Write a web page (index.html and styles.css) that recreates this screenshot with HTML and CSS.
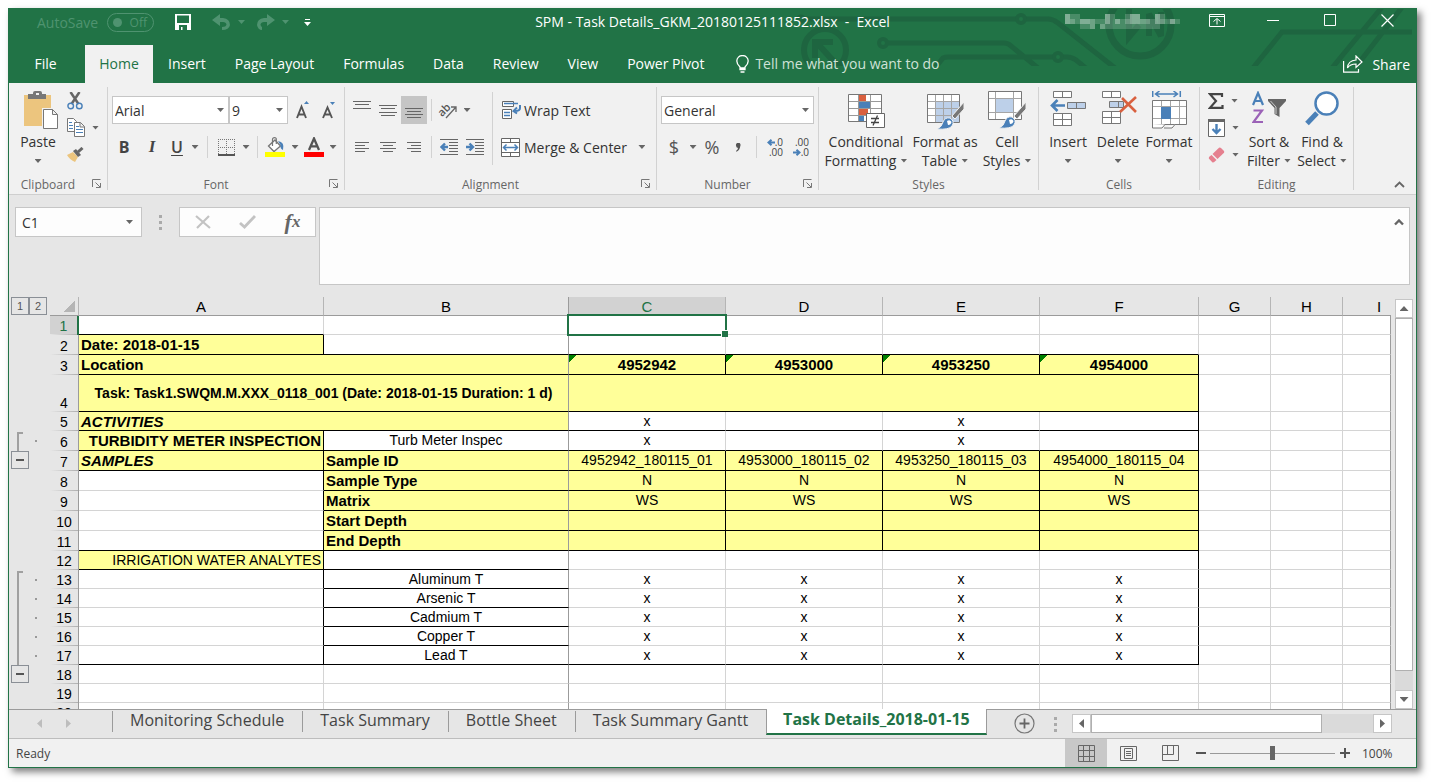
FILE: index.html
```
<!DOCTYPE html>
<html lang="en">
<head>
<meta charset="utf-8">
<title>SPM - Task Details_GKM_20180125111852.xlsx - Excel</title>
<link rel="stylesheet" href="styles.css">
</head>
<body>
<div class="window">
  <header class="top">
    <svg class="circuit" viewBox="796 9 619 57" aria-hidden="true">
      <g fill="none" stroke="#1e6540" stroke-width="5">
        <path d="M803 19H1015M1025 19H1047Q1052 19 1057 23L1114 68"/>
        <circle cx="1020" cy="19" r="4" stroke-width="4"/><circle cx="800" cy="19" r="3" stroke-width="3"/>
        <circle cx="824" cy="50" r="21" stroke-width="6"/>
        <path d="M814 58V42H832M816 43L837 66" stroke-width="6"/>
        <circle cx="882" cy="43" r="4" stroke-width="4"/>
        <path d="M887 43H1003Q1007 43 1010 46L1037 68M934 68L942 58Q944 57 947 57H1052M1062 57H1066Q1071 57 1075 60L1086 69"/>
        <circle cx="1057" cy="57" r="4" stroke-width="4"/>
        <circle cx="1139" cy="25" r="31" stroke-width="7"/>
        <path d="M1128 9v28l10-12M1148 36V14l12 22V12" stroke-width="6"/>
        <path d="M1252 68L1281 32H1411M1331 68L1382 6M1354 68L1402 6"/>
      </g>
    </svg>
    <div class="titlebar">
      <div class="quick">
        <span class="dim">AutoSave</span>
        <button class="switch" role="switch" aria-checked="false" aria-label="AutoSave"><span class="knob"></span>Off</button>
        <button class="save" aria-label="Save"><svg width="16" height="16" viewBox="0 0 16 16"><path d="M0 0H16V16H0zM2 1.500V9H14V1.500zM4 11V16H6V13H7.500V16H12V11z" fill="#fff" fill-rule="evenodd"/></svg></button>
        <button class="undo" aria-label="Undo"><svg width="19" height="17" viewBox="0 0 19 17"><path d="M8 0V4H11Q18 5 18 11Q17 16 10 16V13Q14 13 14.500 10.500Q14 8 11 8H8V12L0 6z" fill="#4f9370"/></svg><i class="caret"></i></button>
        <button class="redo" aria-label="Redo"><svg width="19" height="17" viewBox="0 0 19 17"><path d="M11 0V4H8Q1 5 1 11Q2 16 6 16V13Q4.500 12 4.500 10.500Q5 8 8 8H11V12L19 6z" fill="#4f9370"/></svg><i class="caret"></i></button>
        <button class="custom" aria-label="Customize Quick Access Toolbar"><svg width="7" height="7" viewBox="0 0 7 7"><path d="M1 0H6V1H1zM0 3H7L3.500 7z" fill="#fff"/></svg></button>
      </div>
      <div class="title">SPM - Task Details_GKM_20180125111852.xlsx&nbsp; -&nbsp; Excel</div>
      <div class="caption">
        <svg class="user" width="115" height="15" viewBox="0 0 23 3" preserveAspectRatio="none" shape-rendering="crispEdges" fill="#fff" aria-hidden="true">
          <path d="M0 0h3v1h-3zM0 1h23v1h-23zM3 2h3v1h-3zM7 2h12v1h-12zM8 0h2v1h-2zM12 0h3v1h-3zM18 0h2v1h-2z" opacity=".18"/>
          <path d="M0 0h1v2h-1zM3 1h2v1h-2zM8 0h1v2h-1zM10 1h1v1h-1zM13 0h2v2h-2zM18 0h1v2h-1zM21 1h1v1h-1z" opacity=".3"/>
          <path d="M1 1h1v1h-1zM5 1h1v2h-1zM12 1h1v1h-1zM15 1h2v1h-2zM19 1h1v1h-1zM7 2h1v1h-1z" opacity=".2"/>
        </svg>
        <button aria-label="Ribbon Display Options"><svg width="16" height="13" viewBox="0 0 16 13"><path d="M.5.5h15v12H.5zM.5 2.500h15M8 10.500V5M4.500 7.500L8 4.500L11.500 7.500" fill="none" stroke="#fff"/></svg></button>
        <button aria-label="Minimize"><svg width="13" height="13" viewBox="0 0 13 13"><path d="M0 6.500H12" stroke="#fff"/></svg></button>
        <button aria-label="Maximize"><svg width="13" height="13" viewBox="0 0 13 13"><path d="M.5.5h11v11H.5z" fill="none" stroke="#fff"/></svg></button>
        <button aria-label="Close"><svg width="13" height="13" viewBox="0 0 13 13"><path d="M.5.5l12 12M12.500.5l-12 12" stroke="#fff" stroke-width="1.200"/></svg></button>
      </div>
    </div>
    <nav class="tabs">
      <button class="file">File</button><button class="on">Home</button><button>Insert</button><button>Page Layout</button><button>Formulas</button><button>Data</button><button>Review</button><button>View</button><button>Power Pivot</button>
      <button class="tell"><svg width="13" height="18" viewBox="0 0 13 18"><path d="M4 14.500V12Q.8 9 .8 6A5.700 5.500 0 0 1 12.200 6Q12.200 9 9 12V14.500zM4 13H9M4.500 17H8.500" fill="none" stroke="#fff" stroke-width="1.300"/></svg>Tell me what you want to do</button>
      <button class="share"><svg width="20" height="18" viewBox="0 0 20 18"><path d="M.6 6V17.200H15.500V14M4.500 13Q5 5.500 13 5V1L19 7L13 12.500V9Q7 9 4.500 13z" fill="none" stroke="#fff" stroke-width="1.200"/></svg>Share</button>
    </nav>
  </header>

  <section class="ribbon" aria-label="Home">
    <div class="group g-clip">
      <div class="body">
        <button class="big paste"><span class="pic"><svg width="34" height="38" viewBox="0 0 34 38"><path d="M0 4H27V35H0z" fill="#ecc57e"/><path d="M4 3H9V2Q9 0 11 0H16Q18 0 18 2V3H22V8H4z" fill="#777"/><path d="M12 2H15V4H12z" fill="#f1f1f1"/><path d="M18 17H34V38H18z" fill="#f1f1f1"/><path d="M19.500 18.500H28.500L33.500 23.500V37.500H19.500zM28.500 18.500V23.500H33.500" fill="#fff" stroke="#777"/></svg></span>Paste<i class="caret"></i></button>
        <div class="stack">
          <button aria-label="Cut"><svg width="17" height="18" viewBox="0 0 17 18"><path d="M3.500 0L11.500 12M12.500 0L4.500 12" stroke="#666" stroke-width="2.500" fill="none"/><circle cx="3.700" cy="14" r="2.800" fill="none" stroke="#4a80b8" stroke-width="1.400"/><circle cx="12.300" cy="14" r="2.800" fill="none" stroke="#4a80b8" stroke-width="1.400"/></svg></button>
          <button aria-label="Copy"><svg width="18" height="19" viewBox="0 0 18 19"><g fill="#fff" stroke="#777"><path d="M.5.5H6.500L9.500 3.500V13.500H.5z"/><path d="M7.500 4.500H13.500L17.500 8.500V18.500H7.500zM13 4.500V9H17.500"/></g><path d="M2 4.500H5M2 7.500H6M2 10.500H6M9 8.500H12M9 11.500H16M9 14.500H16" stroke="#4a80b8"/></svg><i class="caret"></i></button>
          <button aria-label="Format Painter"><svg width="17" height="15" viewBox="0 0 17 15"><path d="M0 8L6 5L11 10L8 15Q3 13 0 8z" fill="#ecc57e"/><path d="M6 4L9 2L14 8L11 10z" fill="#666"/><path d="M11 5L15.500 1" stroke="#666" stroke-width="3"/></svg></button>
        </div>
      </div>
      <div class="label"><span>Clipboard</span><button class="launch" aria-label="Clipboard settings"><svg width="10" height="10" viewBox="0 0 10 10"><path d="M.5 8V.5H8.500M3.500 3.500L8 8M8.500 4V8.500H4" fill="none" stroke="#777"/></svg></button></div>
    </div>

    <div class="group g-font">
      <div class="body rows">
        <div class="row r1">
          <label class="combo w-name"><select aria-label="Font"><option>Arial</option></select><i class="caret"></i></label><label class="combo w-size"><select aria-label="Font Size"><option>9</option></select><i class="caret"></i></label>
          <button class="b26 grow" aria-label="Increase Font Size"><svg width="14" height="18" viewBox="0 0 14 18"><path d="M1 17L5.500 5.500L10 17M2.500 13.500H8.500" fill="none" stroke="#555" stroke-width="1.900"/><path d="M8 3L10.500 0L13 3z" fill="#4a80b8"/></svg></button>
          <button class="b26" aria-label="Decrease Font Size"><svg width="14" height="18" viewBox="0 0 14 18"><path d="M1 17L5.500 6.500L10 17M2.500 13.500H8.500" fill="none" stroke="#555" stroke-width="1.900"/><path d="M8 1H13L10.500 4z" fill="#4a80b8"/></svg></button>
        </div>
        <div class="row r2">
          <button class="b28 bold">B</button><button class="b28 ital">I</button><button class="b22 under">U</button><button class="c14" aria-label="Underline options"><i class="caret"></i></button><i class="sep s5"></i>
          <button class="b26" aria-label="Borders"><svg width="17" height="17" viewBox="0 0 17 17"><path d="M0 .5H17M0 8.500H17M.5 0V16M8.500 0V16M16.500 0V16" stroke="#777" stroke-dasharray="1 1"/><path d="M0 16H17" stroke="#555" stroke-width="2"/></svg></button><button class="c14" aria-label="Border options"><i class="caret"></i></button><i class="sep s4"></i>
          <button class="b26" aria-label="Fill Color"><svg width="20" height="20" viewBox="0 0 20 20"><path d="M3.500 9L10 3L15.500 9L9 14.500z" fill="#fff" stroke="#777" stroke-width="1.300"/><path d="M7.500 9V2.500Q7.500.7 9.500.7T11.300 2.500V7" fill="none" stroke="#777" stroke-width="1.200"/><path d="M13 4Q20 5 18 13Q15 12 15.500 8z" fill="#4a80b8"/><path d="M0 15H20V20H0z" fill="#ff0"/></svg></button><button class="c14" aria-label="Fill options"><i class="caret"></i></button>
          <button class="b24" aria-label="Font Color"><svg width="20" height="20" viewBox="0 0 20 20"><path d="M5 13L10 1.500L15 13M6.800 9.300H13.200" fill="none" stroke="#555" stroke-width="2.300"/><path d="M0 15H20V20H0z" fill="#f00"/></svg></button><button class="c14" aria-label="Font color options"><i class="caret"></i></button>
        </div>
      </div>
      <div class="label"><span>Font</span><button class="launch" aria-label="Font settings"><svg width="10" height="10" viewBox="0 0 10 10"><path d="M.5 8V.5H8.500M3.500 3.500L8 8M8.500 4V8.500H4" fill="none" stroke="#777"/></svg></button></div>
    </div>

    <div class="group g-align">
      <div class="body">
        <div class="rows left">
          <div class="row r1">
            <button class="b26" aria-label="Top Align"><svg width="18" height="19" viewBox="0 0 18 19"><path d="M0 .5H18M2 3.500H16M0 7.500H18" stroke="#666"/></svg></button><button class="b26" aria-label="Middle Align"><svg width="18" height="15" viewBox="0 0 18 15"><path d="M0 2.500H18M2 5.500H16M0 9.500H18M2 12.500H16" stroke="#666"/></svg></button><button class="b26 pressed" aria-label="Bottom Align"><svg width="18" height="18" viewBox="0 0 18 18"><path d="M0 7.500H18M2 10.500H16M0 13.500H18M2 16.500H16" stroke="#666"/></svg></button><i class="sep s4"></i>
            <button class="b24" aria-label="Orientation"><svg class="orient" width="20" height="18" viewBox="0 0 20 18"><text x="0" y="13" transform="rotate(-45 6 10)" class="ab">ab</text><path d="M8 17L18 6M13 6H18V11" fill="none" stroke="#666" stroke-width="1.300"/></svg></button><button class="c14" aria-label="Orientation options"><i class="caret"></i></button>
          </div>
          <div class="row r2">
            <button class="b26" aria-label="Align Left"><svg width="14" height="11" viewBox="0 0 14 11"><path d="M0 .5H14M0 3.500H10M0 6.500H14M0 9.500H10" stroke="#666"/></svg></button><button class="b26" aria-label="Center"><svg width="16" height="11" viewBox="0 0 16 11"><path d="M0 .5H16M3 3.500H13M0 6.500H16M3 9.500H13" stroke="#666"/></svg></button><button class="b26" aria-label="Align Right"><svg width="14" height="11" viewBox="0 0 14 11"><path d="M0 .5H14M4 3.500H14M0 6.500H14M4 9.500H14" stroke="#666"/></svg></button><i class="sep s4"></i>
            <button class="b26" aria-label="Decrease Indent"><svg width="18" height="16" viewBox="0 0 18 16"><path d="M0 .5H18M9 3.500H18M9 6.500H18M9 9.500H18M9 12.500H18M0 15.500H18" stroke="#666"/><path d="M8 8H2M5 4.500L1.500 8L5 11.500" fill="none" stroke="#4a80b8" stroke-width="2.400"/></svg></button><button class="b26" aria-label="Increase Indent"><svg width="18" height="16" viewBox="0 0 18 16"><path d="M0 .5H18M9 3.500H18M9 6.500H18M9 9.500H18M9 12.500H18M0 15.500H18" stroke="#666"/><path d="M0 8H6.500M3.500 4.500L7 8L3.500 11.500" fill="none" stroke="#4a80b8" stroke-width="2.400"/></svg></button>
          </div>
        </div>
        <i class="sep tall"></i>
        <div class="rows right">
          <div class="row r1"><button class="wide"><svg width="20" height="19" viewBox="0 0 20 19"><path d="M1.500.5H12.500V5.500H1.500zM1.500 8.500H10.500V17.500H1.500z" fill="#fff" stroke="#666"/><path d="M3 2.500H17M3 11.500H9M3 14.500H9" stroke="#4a80b8" stroke-width="1.300"/><path d="M19 4V7Q19 10 14 10M16 6.500L12.500 10L16 12.500" fill="none" stroke="#4a80b8" stroke-width="2"/></svg>Wrap Text</button></div>
          <div class="row r2"><button class="wide"><svg width="20" height="19" viewBox="0 0 20 19"><path d="M.5.5H18.500V18.500H.5zM.5 4.500H18.500M.5 14.500H18.500M9.500.5V4.500M9.500 14.500V18.500" fill="#fff" stroke="#666"/><path d="M3 9.500H16M5.500 6.500L2.500 9.500L5.500 12.500M13.500 6.500L16.500 9.500L13.500 12.500" fill="none" stroke="#4a80b8" stroke-width="1.500"/></svg>Merge &amp; Center</button><button class="c14 far" aria-label="Merge options"><i class="caret"></i></button></div>
        </div>
      </div>
      <div class="label"><span>Alignment</span><button class="launch" aria-label="Alignment settings"><svg width="10" height="10" viewBox="0 0 10 10"><path d="M.5 8V.5H8.500M3.500 3.500L8 8M8.500 4V8.500H4" fill="none" stroke="#777"/></svg></button></div>
    </div>

    <div class="group g-num">
      <div class="body rows">
        <div class="row r1 pad"><label class="combo fill"><select aria-label="Number Format"><option>General</option></select><i class="caret"></i></label></div>
        <div class="row r2 pad"><button class="b26 sym">$</button><button class="c12" aria-label="Accounting options"><i class="caret"></i></button><button class="b26 sym">%</button><button class="b26" aria-label="Comma Style"><svg width="6" height="9" viewBox="0 0 6 9"><path d="M1 2.500A2.300 2.300 0 1 1 5.300 3Q5 7 1.500 8.700L1 8Q3 6.500 3 5Q1 4.500 1 2.500z" fill="#555"/></svg></button><i class="sep s5"></i><button class="b26 dec" aria-label="Increase Decimal"><span><svg width="8" height="7" viewBox="0 0 8 7"><path d="M8 3.500H2M4.500.8L1.500 3.500L4.500 6.200" fill="none" stroke="#4a80b8" stroke-width="2"/></svg>.0</span><span>.00</span></button><button class="b26 dec" aria-label="Decrease Decimal"><span>.00</span><span><svg width="8" height="7" viewBox="0 0 8 7"><path d="M0 3.500H6M3.500.8L6.500 3.500L3.500 6.200" fill="none" stroke="#4a80b8" stroke-width="2"/></svg>.0</span></button></div>
      </div>
      <div class="label"><span>Number</span><button class="launch" aria-label="Number settings"><svg width="10" height="10" viewBox="0 0 10 10"><path d="M.5 8V.5H8.500M3.500 3.500L8 8M8.500 4V8.500H4" fill="none" stroke="#777"/></svg></button></div>
    </div>

    <div class="group g-styles">
      <div class="body pad">
        <button class="big w86"><span class="pic low"><svg width="37" height="34" viewBox="0 0 37 34"><path d="M.5.5H33.500V27.500H.5z" fill="#fff"/><path d="M11 1H18V7H11zM11 15H20V21H11z" fill="#d9603f"/><path d="M11 8H22V14H11zM11 22H16V28H11z" fill="#4a80b8"/><path d="M.5.5H33.500V27.500H.5z" fill="none" stroke="#777"/><path d="M1 7.500H33M1 14.500H33M1 21.500H33M10.500 1V27M22.500 1V27" stroke="#999" fill="none"/><path d="M18.500 19.500H36.500V33.500H18.500z" fill="#fff" stroke="#666"/><path d="M23 24.500H31M23 28.500H31M29.500 21.500L25 31.500" stroke="#444" stroke-width="1.300"/></svg></span>Conditional<br><span class="ln">Formatting<i class="caret"></i></span></button>
        <button class="big w72"><span class="pic low"><svg width="37" height="36" viewBox="0 0 37 36"><path d="M.5.5H32.500V28.500H.5z" fill="#fff"/><path d="M8 8H32V28H8z" fill="#bdd0e9"/><path d="M.5.5H32.500V28.500H.5z" fill="none" stroke="#777"/><path d="M1 7.500H32M1 14.500H32M1 21.500H32M8.500 1V28M16.500 1V28M24.500 1V28" stroke="#a5a5a5"/><path d="M37 8L25 22L28 25L37 15z" fill="#777" stroke="#f1f1f1"/><path d="M10 35Q15 33 16 28Q18 23 23 24Q28 27 25 32Q22 36 10 35z" fill="#4a80b8" stroke="#f1f1f1"/><path d="M20 27Q23 25 24.500 28Q24 31 21 31" fill="#fff"/></svg></span>Format as<br><span class="ln">Table<i class="caret"></i></span></button>
        <button class="big w52"><span class="pic"><svg width="38" height="38" viewBox="0 0 38 38"><path d="M.5.5H33.500V28.500H.5z" fill="#fff" stroke="#777"/><path d="M1 7.500H33M1 21.500H33M7.500 1V28M25.500 1V28" stroke="#a5a5a5"/><path d="M8 8H25V21H8z" fill="#bdd0e9"/><path d="M38 11L26 25L29 28L38 18z" fill="#777" stroke="#f1f1f1"/><path d="M11 37Q16 35 17 30Q19 25 24 26Q29 29 26 34Q23 38 11 37z" fill="#4a80b8" stroke="#f1f1f1"/><path d="M21 29Q24 27 25.500 30Q25 33 22 33" fill="#fff"/></svg></span>Cell<br><span class="ln">Styles<i class="caret"></i></span></button>
      </div>
      <div class="label"><span>Styles</span></div>
    </div>

    <div class="group g-cells">
      <div class="body pad">
        <button class="big w50"><span class="pic"><svg width="37" height="36" viewBox="0 0 37 36"><g fill="#fff" stroke="#777"><path d="M3.500.5H21.500V6.500H3.500zM12.500.5V6.500M3.500 22.500H21.500V34.500H3.500zM12.500 22.500V34.500M3.500 28.500H21.500"/></g><path d="M17.500 11.500H35.500V17.500H17.500zM26.500 11.500V17.500" fill="#bdd0e9" stroke="#777"/><path d="M15 14.500H2M7.500 9L2 14.500L7.500 20" fill="none" stroke="#4a80b8" stroke-width="2.600"/></svg></span>Insert<i class="caret"></i></button>
        <button class="big w50"><span class="pic"><svg width="37" height="36" viewBox="0 0 37 36"><g fill="#fff" stroke="#777"><path d="M2.500.5H20.500V6.500H2.500zM11.500.5V6.500M2.500 20.500H20.500V32.500H2.500zM11.500 20.500V32.500M2.500 26.500H20.500"/></g><path d="M9.500 10.500H23.500V16.500H9.500zM18.500 10.500V16.500" fill="#bdd0e9" stroke="#777"/><path d="M22 7L36 21M36 6L20 21" fill="none" stroke="#d9603f" stroke-width="2.600"/></svg></span>Delete<i class="caret"></i></button>
        <button class="big w52"><span class="pic"><svg width="35" height="38" viewBox="0 0 35 38"><path d="M.7 0V6M28.300 0V6M4 3H25M7.500 0L3.500 3L7.500 6M21.500 0L25.500 3L21.500 6" fill="none" stroke="#4a80b8" stroke-width="1.500"/><path d="M.5 9.500H34.500V33.500H.5z" fill="#fff" stroke="#777"/><path d="M1 15.500H34M1 27.500H34M9.500 10V33M18.500 10V33M27.500 10V33" stroke="#a5a5a5"/><path d="M9 16H19V28H9z" fill="#4a80b8"/><path d="M.5 33V37H10L13 33.500M12 37H20L23 33.500" fill="#fff" stroke="#777"/></svg></span>Format<i class="caret"></i></button>
      </div>
      <div class="label"><span>Cells</span></div>
    </div>

    <div class="group g-edit">
      <div class="body pad">
        <div class="stack tight">
          <button aria-label="AutoSum"><svg width="16" height="16" viewBox="0 0 16 16"><path d="M14 4V1.200H2L8 8L2 14.800H14.500V12" fill="none" stroke="#444" stroke-width="2.200"/></svg><i class="caret"></i></button>
          <button aria-label="Fill"><svg width="17" height="18" viewBox="0 0 17 18"><path d="M.5.5H16.500V17.500H.5z" fill="#fff" stroke="#666"/><path d="M0 0H17V3H0z" fill="#666"/><path d="M8.500 5V14M4.500 10L8.500 14L12.500 10" fill="none" stroke="#4a80b8" stroke-width="2.400"/></svg><i class="caret"></i></button>
          <button aria-label="Clear"><svg width="17" height="16" viewBox="0 0 17 16"><path d="M4.500 7L11 .8Q12 0 13 1L16 4Q16.500 5 16 5.700L9.500 12z" fill="#e5808f"/><path d="M3.500 8L8.500 13L6 15.300L4.500 15.500L.8 11.500L1 10z" fill="#e5808f"/></svg><i class="caret"></i></button>
        </div>
        <button class="big w52"><span class="pic"><svg width="34" height="32" viewBox="0 0 34 32"><path d="M1 14L6 2L11 14M3 10H9" fill="none" stroke="#4a80b8" stroke-width="2.200"/><path d="M1.500 19.500H10L1.500 31H11" fill="none" stroke="#9b62b7" stroke-width="2.200"/><path d="M16 8H34V10L27.500 17V26L22.500 23V17L16 10z" fill="#666"/><path d="M18.500 10L24 16V23" stroke="#ccc" fill="none"/></svg></span>Sort &amp;<br><span class="ln">Filter<i class="caret"></i></span></button>
        <button class="big w54"><span class="pic"><svg width="34" height="35" viewBox="0 0 34 35"><path d="M12 22L2 32.500" stroke="#4a80b8" stroke-width="5"/><circle cx="21.500" cy="12.500" r="11" fill="#fff" stroke="#4a80b8" stroke-width="2.500"/></svg></span>Find &amp;<br><span class="ln">Select<i class="caret"></i></span></button>
      </div>
      <div class="label"><span>Editing</span></div>
    </div>
    <button class="collapse" aria-label="Collapse the Ribbon"><svg width="11" height="7" viewBox="0 0 11 7"><path d="M1 6L5.500 1.500L10 6" fill="none" stroke="#666" stroke-width="1.800"/></svg></button>
  </section>

  <section class="formula">
    <div class="namebox"><input type="text" value="C1" aria-label="Name Box"><i class="caret"></i></div>
    <div class="dots"><i></i><i></i><i></i></div>
    <div class="fxbox">
      <button aria-label="Cancel"><svg width="16" height="14" viewBox="0 0 16 14"><path d="M1 1L15 13M14 1L2 13" stroke="#c3c3c3" stroke-width="2.200"/></svg></button>
      <button aria-label="Enter"><svg width="17" height="14" viewBox="0 0 17 14"><path d="M1 8L5.500 12L16 1" fill="none" stroke="#c3c3c3" stroke-width="2.800"/></svg></button>
      <button class="fx" aria-label="Insert Function"><span>f</span><small>x</small></button>
    </div>
    <div class="bar"><textarea aria-label="Formula Bar"></textarea><button aria-label="Collapse Formula Bar"><svg width="10" height="7" viewBox="0 0 10 7"><path d="M1 5.500L5 1.500L9 5.500" fill="none" stroke="#666" stroke-width="2.400"/></svg></button></div>
  </section>

  <main class="work">
    <div class="sheet">
      <table>
        <colgroup><col class="k-out"><col class="k-num"><col class="k-a"><col class="k-a"><col class="k-c"><col class="k-c"><col class="k-c"><col class="k-f"><col class="k-g"><col class="k-g"><col></colgroup>
        <thead>
          <tr><th class="out"><div class="levels"><button>1</button><button>2</button></div></th><th class="corner"></th><th>A</th><th class="fz">B</th><th class="sel">C</th><th>D</th><th>E</th><th>F</th><th>G</th><th>H</th><th class="cut">I</th></tr>
        </thead>
        <tbody>
          <tr><td class="out"></td><th class="sel">1</th><td class="kb"></td><td class="fz"></td><td class="cur"><div class="ring"></div></td><td></td><td></td><td></td><td></td><td></td><td></td></tr>
          <tr class="h20"><td class="out"></td><th>2</th><td class="y kr kb b">Date: 2018-01-15</td><td class="kb fz"></td><td class="kb"></td><td class="kb"></td><td class="kb"></td><td class="kb"></td><td></td><td></td><td></td></tr>
          <tr class="h20"><td class="out"></td><th>3</th><td colspan="2" class="y kb b fz">Location</td><td class="y kr kb b c flag">4952942</td><td class="y kr kb b c flag">4953000</td><td class="y kr kb b c flag">4953250</td><td class="y kr kb b c flag">4954000</td><td></td><td></td><td></td></tr>
          <tr class="h37"><td class="out"></td><th>4</th><td colspan="2" class="y kb b task fz">Task: Task1.SWQM.M.XXX_0118_001 (Date: 2018-01-15 Duration: 1 d)</td><td colspan="4" class="y kr kb"></td><td></td><td></td><td></td></tr>
          <tr><td class="out"></td><th>5</th><td colspan="2" class="y kb b i fz">ACTIVITIES</td><td class="kb c">x</td><td class="kb"></td><td class="kb c">x</td><td class="kb kr"></td><td></td><td></td><td></td></tr>
          <tr class="h20"><td class="out first"></td><th>6</th><td class="y kr kb b r">TURBIDITY METER INSPECTION</td><td class="kb c fz">Turb Meter Inspec</td><td class="kb c">x</td><td class="kb"></td><td class="kb c">x</td><td class="kb kr"></td><td></td><td></td><td></td></tr>
          <tr class="h20"><td class="out"><button class="minus" aria-label="Collapse row 6"></button></td><th>7</th><td class="y kr kb b i">SAMPLES</td><td class="y kb b fz">Sample ID</td><td class="y kr kb c">4952942_180115_01</td><td class="y kr kb c">4953000_180115_02</td><td class="y kr kb c">4953250_180115_03</td><td class="y kr kb c">4954000_180115_04</td><td></td><td></td><td></td></tr>
          <tr class="h20"><td class="out"></td><th>8</th><td class="kr"></td><td class="y kb b fz">Sample Type</td><td class="y kr kb c">N</td><td class="y kr kb c">N</td><td class="y kr kb c">N</td><td class="y kr kb c">N</td><td></td><td></td><td></td></tr>
          <tr class="h20"><td class="out"></td><th>9</th><td class="kr"></td><td class="y kb b fz">Matrix</td><td class="y kr kb c">WS</td><td class="y kr kb c">WS</td><td class="y kr kb c">WS</td><td class="y kr kb c">WS</td><td></td><td></td><td></td></tr>
          <tr class="h20"><td class="out"></td><th>10</th><td class="kr"></td><td class="y kb b fz">Start Depth</td><td class="y kr kb"></td><td class="y kr kb"></td><td class="y kr kb"></td><td class="y kr kb"></td><td></td><td></td><td></td></tr>
          <tr class="h20"><td class="out"></td><th>11</th><td class="kr kb"></td><td class="y kb b fz">End Depth</td><td class="y kr kb"></td><td class="y kr kb"></td><td class="y kr kb"></td><td class="y kr kb"></td><td></td><td></td><td></td></tr>
          <tr><td class="out"></td><th>12</th><td class="y kr kb r">IRRIGATION WATER ANALYTES</td><td class="kb fz"></td><td></td><td></td><td></td><td class="kr"></td><td></td><td></td><td></td></tr>
          <tr><td class="out first"></td><th>13</th><td class="kr"></td><td class="kb c fz">Aluminum T</td><td class="c">x</td><td class="c">x</td><td class="c">x</td><td class="c kr">x</td><td></td><td></td><td></td></tr>
          <tr><td class="out mid"></td><th>14</th><td class="kr"></td><td class="kb c fz">Arsenic T</td><td class="c">x</td><td class="c">x</td><td class="c">x</td><td class="c kr">x</td><td></td><td></td><td></td></tr>
          <tr><td class="out mid"></td><th>15</th><td class="kr"></td><td class="kb c fz">Cadmium T</td><td class="c">x</td><td class="c">x</td><td class="c">x</td><td class="c kr">x</td><td></td><td></td><td></td></tr>
          <tr><td class="out mid"></td><th>16</th><td class="kr"></td><td class="kb c fz">Copper T</td><td class="c">x</td><td class="c">x</td><td class="c">x</td><td class="c kr">x</td><td></td><td></td><td></td></tr>
          <tr><td class="out mid"></td><th>17</th><td class="kr kb"></td><td class="kb c fz">Lead T</td><td class="c kb">x</td><td class="c kb">x</td><td class="c kb">x</td><td class="c kr kb">x</td><td></td><td></td><td></td></tr>
          <tr><td class="out"><button class="minus" aria-label="Collapse rows 13 to 17"></button></td><th>18</th><td></td><td class="fz"></td><td></td><td></td><td></td><td></td><td></td><td></td><td></td></tr>
          <tr><td class="out"></td><th>19</th><td></td><td class="fz"></td><td></td><td></td><td></td><td></td><td></td><td></td><td></td></tr>
          <tr><td class="out"></td><th>20</th><td></td><td class="fz"></td><td></td><td></td><td></td><td></td><td></td><td></td><td></td></tr>
        </tbody>
      </table>
    </div>
    <div class="vscroll">
      <button aria-label="Scroll up"><i class="tri up"></i></button>
      <div class="track"><div class="thumb"></div></div>
      <button aria-label="Scroll down"><i class="tri down"></i></button>
    </div>
  </main>

  <div class="sheets">
    <div class="nav"><button aria-label="Previous sheet"><i class="tri prev"></i></button><button aria-label="Next sheet"><i class="tri next"></i></button></div>
    <button class="tab">Monitoring Schedule</button><button class="tab">Task Summary</button><button class="tab">Bottle Sheet</button><button class="tab">Task Summary Gantt</button><button class="tab active">Task Details_2018-01-15</button>
    <button class="add" aria-label="New sheet"><svg width="21" height="21" viewBox="0 0 21 21"><circle cx="10.500" cy="10.500" r="9.500" fill="none" stroke="#777" stroke-width="1.200"/><path d="M10.500 5.500V15.500M5.500 10.500H15.500" stroke="#666" stroke-width="1.800"/></svg></button>
    <div class="dots"><i></i><i></i><i></i></div>
    <div class="hscroll"><button aria-label="Scroll left"><i class="tri prev"></i></button><div class="track"><div class="thumb"></div></div><button aria-label="Scroll right"><i class="tri next"></i></button></div>
  </div>

  <footer class="status">
    <span class="ready">Ready</span>
    <button class="view on" aria-label="Normal"><svg width="17" height="17" viewBox="0 0 17 17"><path d="M.5.5H16.500V16.500H.5zM5.500.5V16.500M11.500.5V16.500M.5 5.500H16.500M.5 11.500H16.500" fill="none" stroke="#666"/></svg></button>
    <button class="view" aria-label="Page Layout"><svg width="17" height="15" viewBox="0 0 17 15"><path d="M.5.5H16.500V14.500H.5zM4.500 2.500H12.500V12.500H4.500zM6 5.500H11M6 7.500H11M6 9.500H11" fill="none" stroke="#666"/></svg></button>
    <button class="view" aria-label="Page Break Preview"><svg width="17" height="16" viewBox="0 0 17 16"><path d="M.5.5H16.500V15.500H.5zM5.500.5V9.500M11.500.5V9.500M.5 9.500H11.500" fill="none" stroke="#666"/></svg></button>
    <button class="zoom" aria-label="Zoom out"><svg width="10" height="10" viewBox="0 0 10 10"><path d="M0 5H10" stroke="#555" stroke-width="2"/></svg></button>
    <input class="slider" type="range" min="0" max="200" value="100" aria-label="Zoom">
    <button class="zoom" aria-label="Zoom in"><svg width="10" height="10" viewBox="0 0 10 10"><path d="M0 5H10M5 0V10" stroke="#555" stroke-width="2"/></svg></button>
    <span class="pct">100%</span>
  </footer>
</div>
</body>
</html>
```
FILE: styles.css
```
* { box-sizing: border-box; }
body {
  margin: 0;
  height: 100vh;
  padding: 8px 17px 16px 8px;
  display: flex;
  background: #fff;
  color: #333;
  font: 14px/19px "Open Sans", "Noto Sans", sans-serif;
}
button, input, select, textarea { font: inherit; color: inherit; margin: 0; padding: 0; border: 0; background: none; border-radius: 0; outline: 0; }
button { display: flex; align-items: center; justify-content: center; white-space: nowrap; }
svg { display: block; flex: none; }
.window {
  flex: 1;
  min-width: 0;
  display: flex;
  flex-direction: column;
  border: 1px solid #217346;
  background: #e6e6e6;
  box-shadow: 4px 4px 7px rgba(0, 0, 0, .5);
}
.caret { display: block; flex: none; width: 7px; height: 4px; background: #666; clip-path: polygon(0 0, 100% 0, 50% 100%); }

/* title bar and ribbon tabs */
.top { position: relative; background: #217346; color: #fff; }
.circuit { position: absolute; top: 0; right: 0; width: 619px; height: 57px; }
.titlebar { position: relative; display: grid; grid-template-columns: 1fr auto 1fr; align-items: start; height: 36px; }
.title { line-height: 25px; }
.quick { display: flex; align-items: center; height: 26px; padding-left: 28px; color: #4f9370; }
.quick .caret { background: #4f9370; }
.dim { width: 70px; }
.switch { width: 47px; height: 19px; padding: 0 6px 0 5px; justify-content: space-between; border: 1px solid #4f9370; border-radius: 10px; font-size: 12px; }
.knob { width: 9px; height: 9px; border-radius: 50%; background: #4f9370; }
.save { width: 58px; }
.undo, .redo { width: 44px; gap: 7px; justify-content: flex-start; }
.custom { width: 14px; }
.caption { display: flex; justify-content: flex-end; align-items: center; height: 22px; }
.caption button { width: 57px; height: 22px; }
.user { margin: 3px 8px 0 0; }
.tabs { position: relative; display: flex; height: 38px; }
.tabs button { padding: 0 14px 1px 15px; }
.tabs .file { width: 72px; margin-right: 4px; }
.tabs .on { width: 68px; padding: 0 0 1px; background: #f1f1f1; color: #217346; }
.tabs .tell { padding-left: 18px; gap: 6px; color: #cfe2d7; }
.tabs .share { margin-left: auto; padding: 0 6px; gap: 9px; }

/* ribbon */
.ribbon { display: flex; padding: 4px 0; background: #f1f1f1; border-bottom: 1px solid #cfcfcf; color: #333; }
.group { flex: none; display: flex; flex-direction: column; height: 103px; border-right: 1px solid #d2d2d2; }
.g-clip { width: 99px; }
.g-font { width: 237px; }
.g-align { width: 312px; }
.g-num { width: 162px; }
.g-styles { width: 220px; }
.g-cells { width: 161px; }
.g-edit { width: 154px; }
.body { flex: 1; display: flex; }
.rows { display: flex; flex-direction: column; padding-top: 9px; gap: 11px; }
.body .left { padding-left: 4px; }
.pad { padding-left: 4px; }
.row { display: flex; align-items: center; }
.r1 { height: 28px; }
.r2 { height: 24px; }
.g-font .r1 { padding-left: 4px; }
.g-font .r2 { padding-left: 2px; }
.b22 { width: 22px; height: 24px; }
.b24 { width: 24px; height: 24px; }
.b26 { width: 26px; height: 24px; }
.b28 { width: 28px; height: 24px; }
.c12 { width: 12px; height: 24px; }
.c14 { width: 14px; height: 24px; }
.grow { margin-left: 2px; }
.far { margin-left: 8px; }
.pressed { height: 28px; background: #c5c5c5; }
.sep { flex: none; width: 1px; height: 22px; background: #d2d2d2; }
.s4 { margin: 0 4px; }
.s5 { margin: 0 5px; }
.tall { height: 73px; margin: 5px 4px 0; }
.bold { font-weight: 700; font-size: 16px; color: #444; }
.ital { font: italic 700 17px "Liberation Serif", serif; color: #444; }
.under { font-weight: 600; font-size: 16px; color: #444; text-decoration: underline; text-underline-offset: 2px; }
.sym { font-size: 18px; color: #555; }
.orient { overflow: visible; }
.ab { font-size: 11px; font-weight: 600; fill: #555; }
.wide { padding-left: 4px; gap: 3px; height: 24px; }
.dec { flex-direction: column; align-items: flex-end; font-size: 10px; line-height: 10px; padding-right: 5px; color: #444; }
.dec span { display: flex; align-items: center; }
.combo { display: grid; align-items: center; height: 28px; background: #fff; border: 1px solid #c6c6c6; }
.combo select, .combo .caret { grid-area: 1 / 1; }
.combo select { appearance: none; width: 100%; height: 26px; padding-left: 2px; }
.combo .caret { justify-self: end; margin-right: 4px; pointer-events: none; }
.w-name { width: 117px; }
.w-size { width: 59px; }
.fill { width: 153px; }
.big { flex-direction: column; justify-content: flex-start; padding-top: 4px; }
.big br { display: none; }
.pic { display: flex; flex: none; justify-content: center; height: 41px; }
.low { padding-top: 3px; }
.ln { display: flex; align-items: center; gap: 4px; }
.big > .caret { margin-top: 8px; }
.paste { width: 58px; }
.paste .pic { padding-left: 5px; }
.w50 { width: 50px; }
.w52 { width: 52px; }
.w54 { width: 54px; }
.w72 { width: 72px; }
.w86 { width: 86px; }
.stack { display: flex; flex-direction: column; }
.stack button { height: 27px; gap: 7px; justify-content: flex-start; }
.tight button { width: 39px; padding-left: 4px; }
.label { display: flex; height: 12px; align-items: center; font-size: 12px; color: #666; }
.label span { flex: 1; text-align: center; }
.launch { width: 20px; }
.collapse { width: 20px; height: 12px; margin: auto 7px 0 auto; }

/* formula bar */
.formula { display: flex; align-items: flex-start; padding: 12px 6px 13px; }
.namebox { display: grid; align-items: center; width: 127px; height: 30px; background: #fdfdfd; border: 1px solid #c6c6c6; }
.namebox input, .namebox .caret { grid-area: 1 / 1; }
.namebox input { width: 100%; padding-left: 6px; }
.namebox .caret { justify-self: end; margin-right: 8px; }
.dots { display: flex; flex-direction: column; gap: 3px; }
.dots i { width: 3px; height: 3px; background: #aaa; }
.formula .dots { margin: 8px 17px 0; }
.fxbox { display: flex; width: 137px; height: 30px; background: #fdfdfd; border: 1px solid #c6c6c6; }
.fxbox button { flex: 1; }
.fx { font: italic 700 22px/20px "Liberation Serif", serif; color: #666; }
.fx small { font-size: 17px; }
.bar { flex: 1; display: flex; height: 78px; margin-left: 3px; background: #fdfdfd; border: 1px solid #c6c6c6; }
.bar textarea { flex: 1; resize: none; }
.bar button { width: 20px; height: 28px; }

/* worksheet */
.work { flex: 1; min-height: 0; display: flex; margin-top: -1px; }
.sheet { flex: 1; min-width: 0; overflow: hidden; }
table { width: 100%; table-layout: fixed; border-collapse: separate; border-spacing: 0; font: 14px/17px "Liberation Sans", Arial, sans-serif; color: #000; }
.k-out { width: 41px; }
.k-num { width: 29px; }
.k-a { width: 245px; }
.k-c { width: 157px; }
.k-f { width: 159px; }
.k-g { width: 72px; }
th { font-weight: 400; padding: 0; }
tr { height: 19px; }
.h20 { height: 20px; }
.h37 { height: 37px; }
td { padding: 0 2px; background: #fff; border-right: 1px solid #d4d4d4; border-bottom: 1px solid #d4d4d4; white-space: nowrap; }
thead th { font-size: 15px; background: #e6e6e6; border-right: 1px solid #b5b5b5; border-bottom: 1px solid #9b9b9b; }
tbody th { background: #e6e6e6 linear-gradient(90deg, #e6e6e6, #b0b0b0) left bottom / 100% 1px no-repeat; border-right: 1px solid #9b9b9b; vertical-align: bottom; }
thead th:last-child { border-right: 0; }
tr td:last-child { border-right-color: #9b9b9b; }
.cut { padding-left: 24px; }
.y { background-color: #ff9; }
.kr { border-right-color: #000; }
.kb { border-bottom-color: #000; }
.b { font-weight: 700; font-size: 15px; }
.task { font-size: 14px; text-align: center; }
.i { font-style: italic; }
.c { text-align: center; }
.r { text-align: right; }
td.fz, thead .fz { border-right-color: #9b9b9b; }
thead .sel, tbody th.sel { background-color: #d2d2d2; color: #217346; }
tbody th.sel { border-right: 2px solid #217346; }
.flag { background-image: linear-gradient(135deg, #008000 5px, transparent 5px); background-size: 7px 7px; background-repeat: no-repeat; }
td.out, thead .out { padding: 0; background-color: #e6e6e6; border: 0; background-repeat: no-repeat; vertical-align: top; }
thead .corner { background: #e6e6e6 linear-gradient(135deg, transparent 50%, #b5b5b5 50%) 14px 4px / 11px 11px no-repeat; }
.levels { display: flex; padding-left: 2px; }
.levels button { width: 18px; height: 18px; border: 1px solid #8a8f96; font-size: 11px; color: #555; }
td.first { background-image: linear-gradient(#a0a0a0, #a0a0a0), linear-gradient(#a0a0a0, #a0a0a0), linear-gradient(#999, #999); background-size: 6px 2px, 2px 100%, 2px 2px; background-position: 8px 1px, 8px 2px, 26px 9px; }
td.mid { background-image: linear-gradient(#a0a0a0, #a0a0a0), linear-gradient(#999, #999); background-size: 2px 100%, 2px 2px; background-position: 8px 0, 26px 9px; }
.minus { width: 18px; height: 18px; margin-left: 2px; border: 1px solid #8a8f96; background: linear-gradient(#555, #555) center / 8px 2px no-repeat; }
.cur { position: relative; }
.ring { position: absolute; inset: -2px; border: 2px solid #217346; z-index: 1; }
.ring::after { content: ""; position: absolute; right: -3px; bottom: -3px; width: 6px; height: 6px; background: #217346; border: solid #fff; border-width: 1px 0 0 1px; }

/* scroll bars */
.vscroll { display: flex; flex-direction: column; width: 25px; padding: 2px 3px 0 4px; }
.vscroll button { height: 19px; background: #fff; border: 1px solid #c6c6c6; }
.vscroll .track { flex: 1; background: #dadada; }
.vscroll .thumb { height: 95%; background: #fff; border: 1px solid #b0b0b0; }
.tri { width: 9px; height: 5px; background: #666; }
.up { clip-path: polygon(50% 0, 100% 100%, 0 100%); }
.down { clip-path: polygon(0 0, 100% 0, 50% 100%); }
.prev, .next { width: 5px; height: 9px; }
.prev { clip-path: polygon(100% 0, 100% 100%, 0 50%); }
.next { clip-path: polygon(0 0, 100% 50%, 0 100%); }

/* sheet tabs */
.sheets { display: flex; align-items: flex-start; height: 29px; border-top: 1px solid #9b9b9b; font-size: 16px; color: #444; }
.nav { display: flex; width: 103px; height: 27px; padding-left: 16px; }
.nav button { width: 29px; }
.nav .tri { background: #bdbdbd; }
.tab { height: 21px; margin-top: 1px; padding: 0 18px 2px 17px; border-left: 1px solid #9b9b9b; }
.active { height: 26px; margin-top: -1px; padding: 0 16px 4px; background: #fff; border-right: 1px solid #9b9b9b; border-bottom: 2px solid #217346; color: #217346; font-weight: 700; }
.add { width: 21px; height: 27px; margin-left: auto; }
.sheets .dots { margin: 7px 15px 0 19px; }
.hscroll { display: flex; width: 320px; height: 19px; margin: 4px 24px 0 0; }
.hscroll button { width: 19px; background: #fff; border: 1px solid #c6c6c6; }
.hscroll .track { flex: 1; background: #dadada; }
.hscroll .thumb { width: 82%; height: 19px; background: #fff; border: 1px solid #b0b0b0; }

/* status bar */
.status { display: flex; align-items: center; height: 29px; background: #f1f1f1; border-top: 1px solid #bdbdbd; font-size: 12px; color: #444; }
.ready { margin: 0 auto 0 7px; }
.view { width: 42px; height: 28px; }
.view.on { background: #c8c8c8; }
.zoom { width: 10px; height: 20px; margin-left: 5px; }
.slider { appearance: none; width: 125px; height: 14px; margin: 0 0 0 4px; background: linear-gradient(#999, #999) center / 100% 1px no-repeat; }
.slider::-webkit-slider-thumb { appearance: none; width: 5px; height: 14px; background: #666; border-radius: 0; }
.pct { width: 54px; margin-left: 12px; }
```
